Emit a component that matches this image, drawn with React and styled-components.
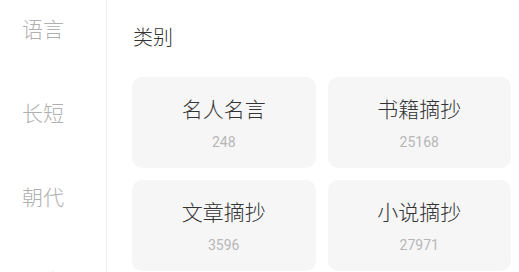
import React from "react";
import styled, { createGlobalStyle } from "styled-components";

const GlobalStyle = createGlobalStyle`
  html, body {
    margin: 0;
    padding: 0;
    background: #ffffff;
    font-family: Roboto, "Noto Sans CJK SC", sans-serif;
  }
`;

const categories = ["语言", "长短", "朝代", "国家"];

const items = [
  { name: "名人名言", count: 248 },
  { name: "书籍摘抄", count: 25168 },
  { name: "文章摘抄", count: 3596 },
  { name: "小说摘抄", count: 27971 },
];

export default function App() {
  return (
    <Page>
      <GlobalStyle />
      <Sidebar>
        <SideList>
          {categories.map((c) => (
            <SideItem key={c}>{c}</SideItem>
          ))}
        </SideList>
      </Sidebar>
      <Main>
        <Title>类别</Title>
        <Grid>
          {items.map((it) => (
            <Card key={it.name}>
              <CardName>{it.name}</CardName>
              <CardCount>{it.count}</CardCount>
            </Card>
          ))}
        </Grid>
      </Main>
    </Page>
  );
}

const Page = styled.div`
  display: flex;
  width: 519px;
  height: 272px;
  overflow: hidden;
`;

const Sidebar = styled.aside`
  width: 106px;
  flex-shrink: 0;
  border-right: 1px solid #f2f2f2;
  overflow: hidden;
`;

const SideList = styled.ul`
  list-style: none;
  margin: -14px 0 0 0;
  padding: 0;
`;

const SideItem = styled.li`
  height: 84px;
  display: flex;
  align-items: center;
  padding-left: 22px;
  font-family: "Noto Sans CJK SC", sans-serif;
  font-weight: 300;
  font-size: 21px;
  color: #b0b0b0;
`;

const Main = styled.main`
  flex: 1;
  padding: 23px 8px 0 25px;
`;

const Title = styled.h2`
  margin: 0 0 26px 1px;
  font-family: "Noto Sans CJK SC", sans-serif;
  font-weight: 300;
  font-size: 20px;
  line-height: 28px;
  color: #333333;
`;

const Grid = styled.div`
  display: grid;
  grid-template-columns: 1fr 1fr;
  gap: 12px;
`;

const Card = styled.div`
  height: 91px;
  border-radius: 10px;
  background: #f6f6f7;
  display: flex;
  flex-direction: column;
  align-items: center;
  justify-content: center;
  gap: 11px;
`;

const CardName = styled.div`
  font-family: "Noto Sans CJK SC", sans-serif;
  font-weight: 300;
  font-size: 21px;
  line-height: 28px;
  color: #333333;
`;

const CardCount = styled.div`
  font-family: Roboto, sans-serif;
  font-weight: 400;
  font-size: 14px;
  line-height: 18px;
  color: #b6b6b6;
`;
